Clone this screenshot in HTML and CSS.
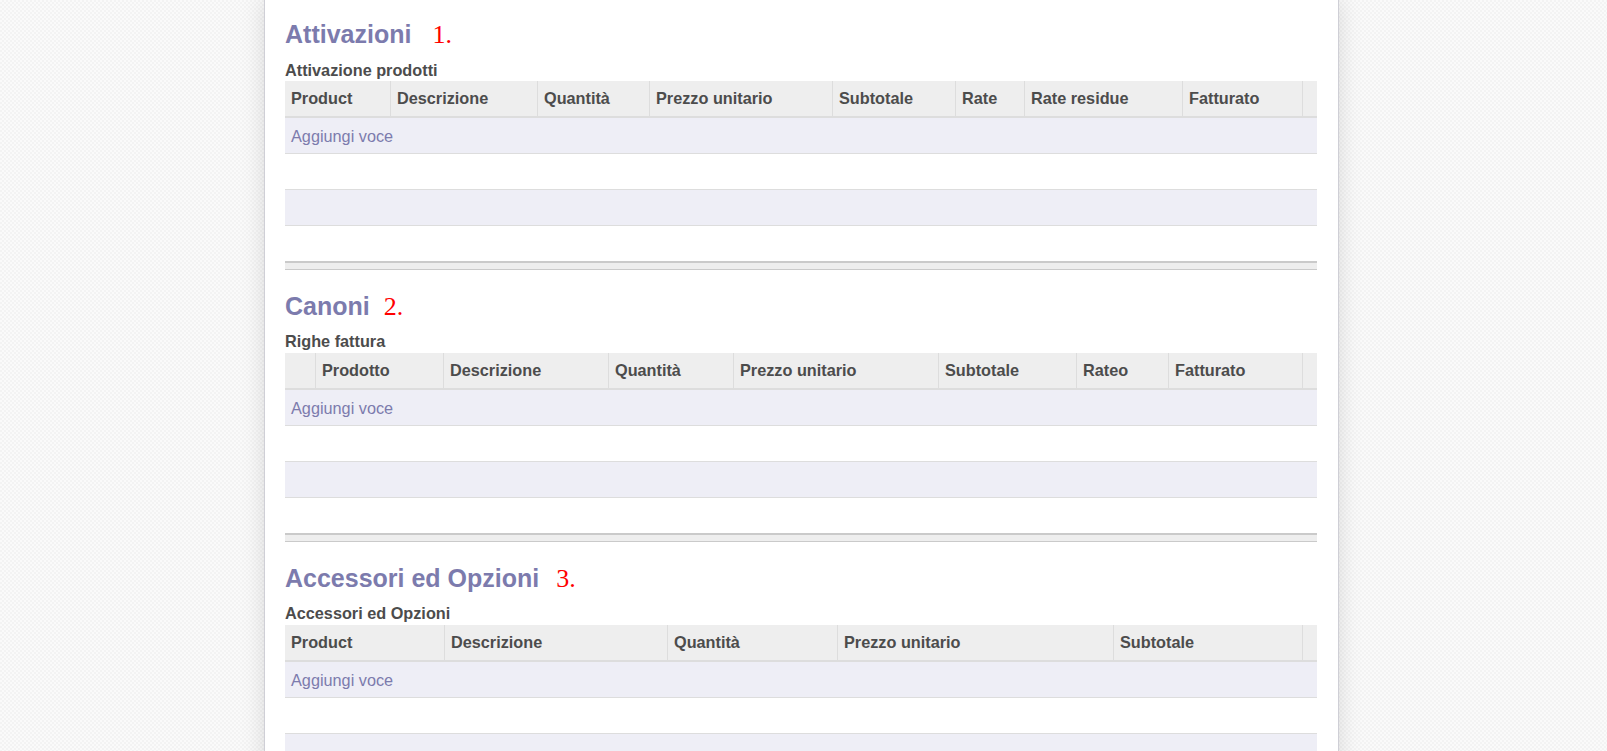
FILE: index.html
```html
<!DOCTYPE html>
<html lang="it">
<head>
<meta charset="utf-8">
<title>Contratto</title>
<link rel="stylesheet" href="styles.css">
</head>
<body>
<div class="page">
  <div class="sheet">
    <section class="section">
      <h1 class="title">Attivazioni<span class="num num-1">1.</span></h1>
      <div class="label">Attivazione prodotti</div>
      <table class="list t1">
        <colgroup><col><col><col><col><col><col><col><col><col></colgroup>
        <thead>
          <tr><th>Product</th><th>Descrizione</th><th>Quantità</th><th>Prezzo unitario</th><th>Subtotale</th><th>Rate</th><th>Rate residue</th><th>Fatturato</th><th></th></tr>
        </thead>
        <tbody>
          <tr class="odd"><td colspan="9"><a class="add">Aggiungi voce</a></td></tr>
          <tr><td colspan="9"></td></tr>
          <tr class="odd"><td colspan="9"></td></tr>
          <tr class="last"><td colspan="9"></td></tr>
        </tbody>
        <tfoot><tr><td colspan="9"></td></tr></tfoot>
      </table>
    </section>

    <section class="section">
      <h1 class="title">Canoni<span class="num num-2">2.</span></h1>
      <div class="label">Righe fattura</div>
      <table class="list t2">
        <colgroup><col><col><col><col><col><col><col><col><col></colgroup>
        <thead>
          <tr><th></th><th>Prodotto</th><th>Descrizione</th><th>Quantità</th><th>Prezzo unitario</th><th>Subtotale</th><th>Rateo</th><th>Fatturato</th><th></th></tr>
        </thead>
        <tbody>
          <tr class="odd"><td colspan="9"><a class="add">Aggiungi voce</a></td></tr>
          <tr><td colspan="9"></td></tr>
          <tr class="odd"><td colspan="9"></td></tr>
          <tr class="last"><td colspan="9"></td></tr>
        </tbody>
        <tfoot><tr><td colspan="9"></td></tr></tfoot>
      </table>
    </section>

    <section class="section">
      <h1 class="title">Accessori ed Opzioni<span class="num num-3">3.</span></h1>
      <div class="label">Accessori ed Opzioni</div>
      <table class="list t3">
        <colgroup><col><col><col><col><col><col></colgroup>
        <thead>
          <tr><th>Product</th><th>Descrizione</th><th>Quantità</th><th>Prezzo unitario</th><th>Subtotale</th><th></th></tr>
        </thead>
        <tbody>
          <tr class="odd"><td colspan="6"><a class="add">Aggiungi voce</a></td></tr>
          <tr><td colspan="6"></td></tr>
          <tr class="odd"><td colspan="6"></td></tr>
          <tr class="last"><td colspan="6"></td></tr>
        </tbody>
        <tfoot><tr><td colspan="6"></td></tr></tfoot>
      </table>
    </section>
  </div>
</div>
</body>
</html>
```

FILE: styles.css
```css
html, body {
  height: 100%;
  overflow: hidden;
}

body {
  margin: 0;
  font-family: "Liberation Sans", Arial, sans-serif;
  font-size: 16.25px;
  color: #4c4c4c;
  background-color: #fafafa;
  background-image: repeating-conic-gradient(#f3f3f3 0% 25%, transparent 0% 50%);
  background-size: 4px 4px;
}

.page {
  display: flex;
  justify-content: center;
  padding-right: 4px;
}

.sheet {
  width: 1033px;
  padding: 19.3px 20px 0 20px;
  background: #fff;
  border: 1px solid #cfcfd6;
  border-top: 0;
  box-shadow: 0 0 22px rgba(0, 0, 0, 0.13);
  min-height: 900px;
}

.section {
  margin-bottom: 21.3px;
}

.title {
  margin: 0 0 10.3px 0;
  font-size: 25px;
  line-height: 30px;
  font-weight: bold;
  color: #7c7bad;
  white-space: nowrap;
}

.num {
  font-family: "Liberation Serif", "Times New Roman", serif;
  font-weight: normal;
  font-size: 26px;
  color: #ff0000;
}

.num-1 { margin-left: 21px; }
.num-2 { margin-left: 14px; }
.num-3 { margin-left: 17px; }

.label {
  font-weight: bold;
  line-height: 18px;
  margin-bottom: 2.3px;
  color: #4c4c4c;
}

.list {
  width: 1032px;
  table-layout: fixed;
  border-collapse: separate;
  border-spacing: 0;
}

.list th {
  height: 34px;
  padding: 1px 6px 0 6px;
  background: #eeeeee;
  border-bottom: 2px solid #dddddd;
  text-align: left;
  vertical-align: middle;
  font-weight: bold;
  color: #4c4c4c;
  white-space: nowrap;
  overflow: hidden;
}

.list th + th {
  border-left: 1px solid #dddddd;
}

.list tbody td {
  height: 35px;
  padding: 0 6px;
  border-bottom: 1px solid #dddddd;
  vertical-align: middle;
  white-space: nowrap;
  background: #ffffff;
}

.list tbody tr.odd td {
  background: #eeeef6;
}

.list tbody tr.last td {
  height: 35px;
  border-bottom: 0;
}

.list tfoot td {
  height: 6px;
  padding: 0;
  background: #eeeeee;
  border-top: 2px solid #cacaca;
  border-bottom: 1px solid #cacaca;
}

.add {
  display: inline-block;
  padding-top: 2px;
  color: #7c7bad;
  cursor: pointer;
}

/* column widths */
.t1 col:nth-child(1) { width: 105px; }
.t1 col:nth-child(2) { width: 147px; }
.t1 col:nth-child(3) { width: 112px; }
.t1 col:nth-child(4) { width: 183px; }
.t1 col:nth-child(5) { width: 123px; }
.t1 col:nth-child(6) { width: 69px; }
.t1 col:nth-child(7) { width: 158px; }
.t1 col:nth-child(8) { width: 120px; }
.t1 col:nth-child(9) { width: 15px; }

.t2 col:nth-child(1) { width: 30px; }
.t2 col:nth-child(2) { width: 128px; }
.t2 col:nth-child(3) { width: 165px; }
.t2 col:nth-child(4) { width: 125px; }
.t2 col:nth-child(5) { width: 205px; }
.t2 col:nth-child(6) { width: 138px; }
.t2 col:nth-child(7) { width: 92px; }
.t2 col:nth-child(8) { width: 134px; }
.t2 col:nth-child(9) { width: 15px; }

.t3 col:nth-child(1) { width: 159px; }
.t3 col:nth-child(2) { width: 223px; }
.t3 col:nth-child(3) { width: 170px; }
.t3 col:nth-child(4) { width: 276px; }
.t3 col:nth-child(5) { width: 189px; }
.t3 col:nth-child(6) { width: 15px; }
```
